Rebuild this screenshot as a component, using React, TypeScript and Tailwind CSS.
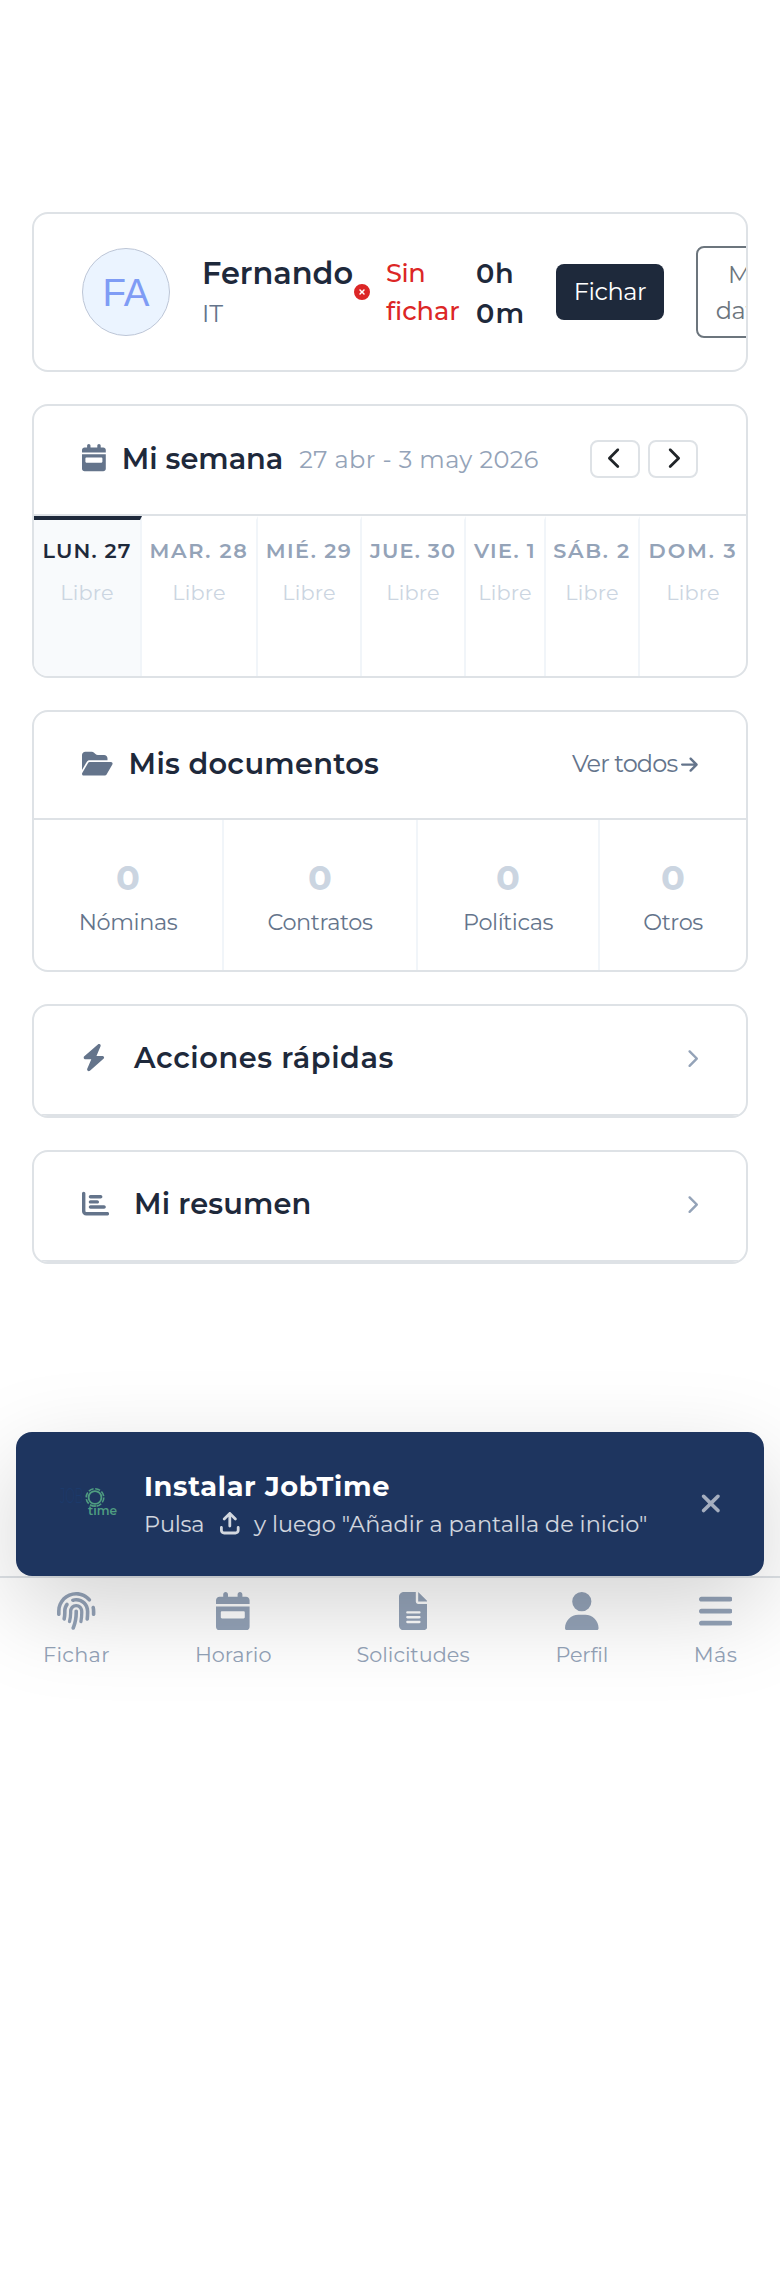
import type { ReactNode } from "react";
import {
  FaArrowRight,
  FaArrowUpFromBracket,
  FaBars,
  FaBolt,
  FaCalendarWeek,
  FaChartBar,
  FaChevronLeft,
  FaChevronRight,
  FaCircleXmark,
  FaFileLines,
  FaFingerprint,
  FaFolderOpen,
  FaUser,
  FaXmark,
} from "react-icons/fa6";

const days = [
  { label: "LUN. 27", size: "w-[108px]", tracking: "tracking-[1.1px]", today: true },
  { label: "MAR. 28", size: "w-[116px]", tracking: "tracking-[1.7px]" },
  { label: "MIÉ. 29", size: "w-[104px]", tracking: "tracking-[1.4px]" },
  { label: "JUE. 30", size: "w-[104px]", tracking: "tracking-[1.1px]" },
  { label: "VIE. 1", size: "w-[80px]", tracking: "tracking-[1.3px]" },
  { label: "SÁB. 2", size: "w-[94px]", tracking: "tracking-[1.7px]" },
  { label: "DOM. 3", size: "w-[106px]", tracking: "tracking-[1.9px]" },
];

const documents = [
  { label: "Nóminas", size: "w-[190px]" },
  { label: "Contratos", size: "w-[194px]" },
  { label: "Políticas", size: "w-[182px]" },
  { label: "Otros", size: "w-[146px]" },
];

const tabs = [
  { label: "Fichar", size: "w-[66px] tracking-[0.3px]", icon: <FaFingerprint className="size-[38.4px]" /> },
  { label: "Horario", size: "w-[74px]", icon: <FaCalendarWeek className="h-[38.4px] w-[33.6px]" /> },
  { label: "Solicitudes", size: "w-[112px]", icon: <FaFileLines className="h-[38.4px] w-[28.8px]" /> },
  { label: "Perfil", size: "w-[52px] tracking-[-0.2px]", icon: <FaUser className="h-[38.4px] w-[33.6px]" /> },
  { label: "Más", size: "w-[42px] tracking-[0.4px]", icon: <FaBars className="h-[38.4px] w-[33.6px]" /> },
];

function Card({ className = "", children }: { className?: string; children: ReactNode }) {
  return (
    <section className={`overflow-hidden rounded-2xl border-2 border-[#dee2e6] bg-white ${className}`}>
      {children}
    </section>
  );
}

function Title({ className = "", children }: { className?: string; children: ReactNode }) {
  return (
    <h2 className={`text-[28.8px] leading-[43px] font-semibold whitespace-nowrap text-[#1e293b] ${className}`}>
      {children}
    </h2>
  );
}

function PagerButton({ children }: { children: ReactNode }) {
  return (
    <button className="flex h-[38px] w-[50px] justify-center rounded-lg border-2 border-[#dee2e6] pt-[5px] text-[#212529]">
      {children}
    </button>
  );
}

function CollapsedCard({ icon, title, tracking }: { icon: ReactNode; title: string; tracking: string }) {
  return (
    <Card>
      <div className="flex h-[110px] items-center border-b-2 border-[#dee2e6] px-12 pb-1">
        <span className="w-[52px] text-[#64748b]">{icon}</span>
        <Title className={`mb-[2px] ${tracking}`}>{title}</Title>
        <FaChevronRight className="mt-[2px] ml-auto h-[19.2px] w-3 text-[#94a3b8]" />
      </div>
    </Card>
  );
}

function Logo() {
  return (
    <svg viewBox="0 0 64 64" className="size-16">
      <text x="4" y="31" fontSize="20" textLength="23" lengthAdjust="spacingAndGlyphs" fill="#1c3a6b" className="font-light">
        JOB
      </text>
      <circle cx="39" cy="25.5" r="6.4" fill="none" stroke="#4f9d81" strokeWidth="1.8" />
      <circle cx="39" cy="25.5" r="8.8" fill="none" stroke="#4f9d81" strokeWidth="1.6" strokeDasharray="5.2 1.7" />
      <text x="32" y="43" fontSize="12" textLength="29" lengthAdjust="spacingAndGlyphs" fill="#4f9d81" className="font-semibold">
        time
      </text>
    </svg>
  );
}

export default function App() {
  return (
    <div className="flex h-[2288px] w-[780px] flex-col overflow-hidden bg-white font-[Montserrat,Inter,sans-serif] text-[#212529]">
      <main className="flex h-[1432px] shrink-0 flex-col gap-8 px-8 pt-[212px]">
        <Card className="h-40">
          <div className="flex h-full w-max items-center pl-12">
            <div className="mr-8 flex size-[88px] items-center justify-center rounded-full border border-[#bcc5d6] bg-[#ebf4ff] pt-[2px] font-['Liberation_Sans',sans-serif] text-[38.5px] leading-none text-[#7f9cf5]">
              FA
            </div>
            <div className="w-[152px] pt-[2px]">
              <div className="text-[30.4px] leading-[42px] font-semibold text-[#1e293b]">Fernando</div>
              <div className="text-2xl leading-[38px] text-[#64748b]">IT</div>
            </div>
            <FaCircleXmark className="mr-4 size-4 text-[#dc2626]" />
            <div className="mr-4 w-[74px] text-[25.6px] leading-[38px] font-medium text-[#dc2626]">
              <div className="tracking-[-0.4px]">Sin</div>
              <div>fichar</div>
            </div>
            <div className="mr-8 w-12 pt-[3px] text-[27.2px] leading-[40px] font-semibold text-[#1e293b]">
              <div className="tracking-[0.8px]">0h</div>
              <div className="tracking-[1.2px]">0m</div>
            </div>
            <button className="mr-8 h-14 w-[108px] rounded-lg bg-[#1e293b] text-2xl leading-9 tracking-[-0.4px] text-white">
              Fichar
            </button>
            <button className="h-[92px] w-[104px] rounded-lg border-2 border-[#6c757d] pt-px text-center text-2xl leading-9 tracking-[-0.4px] text-[#6c757d]">
              Mis
              <br />
              datos
            </button>
          </div>
        </Card>

        <Card>
          <div className="flex h-[110px] items-center border-b-2 border-[#dee2e6] px-12 pb-1">
            <FaCalendarWeek className="mr-4 h-[27.2px] w-[23.8px] text-[#64748b]" />
            <Title>Mi semana</Title>
            <span className="mt-[3px] ml-4 text-2xl leading-9 tracking-[0.4px] text-[#94a3b8]">
              27 abr - 3 may 2026
            </span>
            <div className="mt-[2px] ml-auto flex gap-2">
              <PagerButton>
                <FaChevronLeft className="h-[22.4px] w-[14px]" />
              </PagerButton>
              <PagerButton>
                <FaChevronRight className="h-[22.4px] w-[14px]" />
              </PagerButton>
            </div>
          </div>
          <div className="flex h-40">
            {days.map((day) => (
              <div
                key={day.label}
                className={`border-t-4 border-r-2 border-r-[#f1f5f9] pt-[15px] text-center text-[20.8px] leading-[31px] whitespace-nowrap last:border-r-0 ${day.size} ${
                  day.today ? "border-t-[#1e293b] bg-[#f8fafc]" : "border-t-transparent"
                }`}
              >
                <div className={`font-semibold ${day.tracking} ${day.today ? "text-[#1e293b]" : "text-[#94a3b8]"}`}>
                  {day.label}
                </div>
                <div className="mt-[11px] tracking-[0.2px] text-[#cbd5e1]">Libre</div>
              </div>
            ))}
          </div>
        </Card>

        <Card>
          <div className="flex h-[108px] items-center border-b-2 border-[#dee2e6] px-12 pb-[3px]">
            <FaFolderOpen className="mr-4 h-[27.2px] w-[30.6px] text-[#64748b]" />
            <Title className="tracking-[0.3px]">Mis documentos</Title>
            <a className="ml-auto flex items-center text-2xl leading-9 tracking-[-0.9px] text-[#64748b]">
              Ver todos
              <FaArrowRight className="mt-[2px] ml-1 h-[19.2px] w-[16.8px]" />
            </a>
          </div>
          <div className="flex h-[150px]">
            {documents.map((doc) => (
              <div
                key={doc.label}
                className={`border-r-2 border-[#f1f5f9] pt-[31px] text-center last:border-r-0 ${doc.size}`}
              >
                <div className="text-[35.2px] leading-[53px] font-bold text-[#cbd5e1]">0</div>
                <div className="mt-[2px] text-[22.4px] leading-[33.6px] tracking-[-0.4px] text-[#64748b]">
                  {doc.label}
                </div>
              </div>
            ))}
          </div>
        </Card>

        <CollapsedCard
          icon={<FaBolt className="h-[27.2px] w-[23.8px]" />}
          title="Acciones rápidas"
          tracking="tracking-[0.6px]"
        />
        <CollapsedCard
          icon={<FaChartBar className="size-[27.2px]" />}
          title="Mi resumen"
          tracking="tracking-[0.15px]"
        />
      </main>

      <div className="relative z-10 mx-4 flex h-36 shrink-0 items-center rounded-2xl bg-[#1e355f] pr-[42px] pl-10 text-white shadow-[0_32px_96px_rgba(0,0,0,0.175)]">
        <Logo />
        <div className="ml-6">
          <div className="text-[27.2px] leading-[39px] font-bold tracking-[0.7px]">Instalar JobTime</div>
          <div className="flex items-center text-[22.4px] leading-9 whitespace-nowrap text-white/80">
            <span className="tracking-[-0.2px]">Pulsa</span>
            <FaArrowUpFromBracket className="mr-[14px] ml-4 h-[22.4px] w-[19.6px]" />
            <span>y luego "Añadir a pantalla de inicio"</span>
          </div>
        </div>
        <FaXmark className="mb-[2px] ml-auto h-[28.8px] w-[21.6px] text-white/60" />
      </div>

      <nav className="flex h-28 shrink-0 justify-around border-t-2 border-[#dee2e6] bg-white pt-[14px] text-[#94a3b8]">
        {tabs.map((tab) => (
          <a
            key={tab.label}
            className={`flex flex-col items-center text-[20.8px] leading-[31px] whitespace-nowrap ${tab.size}`}
          >
            {tab.icon}
            <span className="mt-[9px]">{tab.label}</span>
          </a>
        ))}
      </nav>
    </div>
  );
}
